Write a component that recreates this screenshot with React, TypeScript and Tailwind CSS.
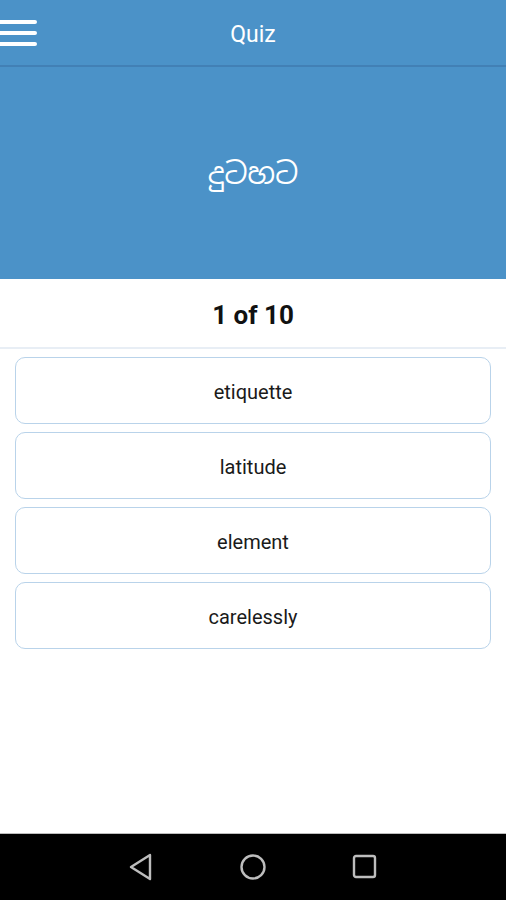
import React from "react";

const options = ["etiquette", "latitude", "element", "carelessly"];

export default function App() {
  return (
    <div
      className="flex h-[900px] w-[506px] flex-col overflow-hidden bg-white"
      style={{ fontFamily: "Roboto, 'Noto Sans', 'Noto Sans Sinhala', sans-serif" }}
    >
      {/* Toolbar */}
      <div className="relative flex h-[67px] shrink-0 items-center justify-center border-b-2 border-[#4280b5] bg-[#4b92c8] pt-[6px]">
        <div className="absolute left-0 top-[20px] flex w-[37px] flex-col gap-[7px]">
          <div className="h-[4px] rounded-r-sm bg-white" />
          <div className="h-[4px] rounded-r-sm bg-white" />
          <div className="h-[4px] rounded-r-sm bg-white" />
        </div>
        <span className="text-[23px] text-white">Quiz</span>
      </div>

      {/* Word */}
      <div className="flex h-[212px] shrink-0 items-center justify-center bg-[#4b92c8] pt-[4px]">
        <span className="text-[29px] text-white">දුටහට</span>
      </div>

      {/* Counter */}
      <div className="flex h-[70px] shrink-0 items-center justify-center border-b-2 border-[#e8eef5] pt-[5px]">
        <span className="text-[26px] font-bold text-[#111]">1 of 10</span>
      </div>

      {/* Options */}
      <div className="flex flex-col gap-[8px] px-[15px] pt-[8px]">
        {options.map((o) => (
          <button
            key={o}
            className="flex h-[67px] items-center justify-center rounded-[10px] border border-[#b9d3ea] bg-white pt-[3px] text-[20px] text-[#1a1a1a]"
          >
            {o}
          </button>
        ))}
      </div>

      <div className="flex-1" />

      {/* Nav bar */}
      <div className="flex h-[67px] shrink-0 items-center justify-center gap-[85px] border-t border-[#bdbdbd] bg-black">
        <svg width="26" height="28" viewBox="0 0 26 28" fill="none" stroke="#bdbdbd" strokeWidth="2.4" strokeLinejoin="round">
          <path d="M22 2 L3 14 L22 26 Z" />
        </svg>
        <svg width="28" height="28" viewBox="0 0 28 28" fill="none" stroke="#bdbdbd" strokeWidth="2.4">
          <circle cx="14" cy="14" r="11.5" />
        </svg>
        <svg width="26" height="26" viewBox="0 0 26 26" fill="none" stroke="#bdbdbd" strokeWidth="2.4">
          <rect x="2" y="2" width="21" height="21" rx="2" />
        </svg>
      </div>
    </div>
  );
}
